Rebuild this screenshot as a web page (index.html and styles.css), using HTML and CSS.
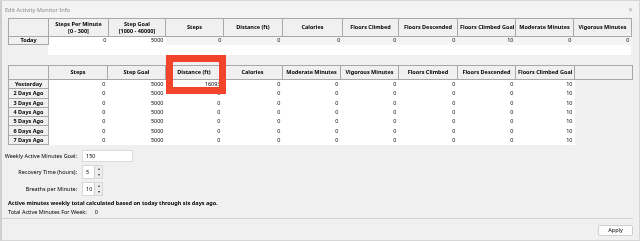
FILE: index.html
```html
<!DOCTYPE html>
<html lang="en">
<head>
  <meta charset="UTF-8" />
  <title>Edit Activity Monitor Info</title>
  <link rel="stylesheet" href="styles.css">
</head>
<body>
  <div class="window">
    <div class="titlebar">
      <span class="title">Edit Activity Monitor Info</span>
      <span class="close">&#x2715;</span>
    </div>

    <!-- today -->
    <table class="grid grid-today">
      <colgroup>
        <col style="width:40px"><col style="width:60px"><col style="width:57px"><col style="width:58px">
        <col style="width:59px"><col style="width:60px"><col style="width:56px"><col style="width:59px">
        <col style="width:58px"><col style="width:58px"><col style="width:58px">
      </colgroup>
      <tr class="head">
        <th></th>
        <th>Steps Per Minute<br>[0 - 300]</th>
        <th>Step Goal<br>[1000 - 40000]</th>
        <th>Steps</th>
        <th>Distance (ft)</th>
        <th>Calories</th>
        <th>Floors Climbed</th>
        <th>Floors Descended</th>
        <th>Floors Climbed Goal</th>
        <th>Moderate Minutes</th>
        <th>Vigorous Minutes</th>
      </tr>
      <tr>
        <th class="rowhead">Today</th>
        <td class="edit">0</td>
        <td class="edit">5000</td>
        <td>0</td>
        <td>0</td>
        <td>0</td>
        <td>0</td>
        <td>0</td>
        <td>10</td>
        <td>0</td>
        <td>0</td>
      </tr>
    </table>
    <div class="grid-fill"></div>

    <!-- previous days -->
    <div class="history">
      <table class="grid grid-days">
        <colgroup>
          <col style="width:40px"><col style="width:59px"><col style="width:58px"><col style="width:57px">
          <col style="width:60px"><col style="width:58px"><col style="width:58px"><col style="width:59px">
          <col style="width:58px"><col style="width:59px"><col style="width:58px">
        </colgroup>
        <tr class="head">
          <th></th>
          <th>Steps</th>
          <th>Step Goal</th>
          <th>Distance (ft)</th>
          <th>Calories</th>
          <th>Moderate Minutes</th>
          <th>Vigorous Minutes</th>
          <th>Floors Climbed</th>
          <th>Floors Descended</th>
          <th>Floors Climbed Goal</th>
          <th></th>
        </tr>
        <tr><th class="rowhead">Yesterday</th><td>0</td><td>5000</td><td>16093</td><td>0</td><td>0</td><td>0</td><td>0</td><td>0</td><td>10</td><td class="blank"></td></tr>
        <tr><th class="rowhead">2 Days Ago</th><td>0</td><td>5000</td><td>0</td><td>0</td><td>0</td><td>0</td><td>0</td><td>0</td><td>10</td><td class="blank"></td></tr>
        <tr><th class="rowhead">3 Days Ago</th><td>0</td><td>5000</td><td>0</td><td>0</td><td>0</td><td>0</td><td>0</td><td>0</td><td>10</td><td class="blank"></td></tr>
        <tr><th class="rowhead">4 Days Ago</th><td>0</td><td>5000</td><td>0</td><td>0</td><td>0</td><td>0</td><td>0</td><td>0</td><td>10</td><td class="blank"></td></tr>
        <tr><th class="rowhead">5 Days Ago</th><td>0</td><td>5000</td><td>0</td><td>0</td><td>0</td><td>0</td><td>0</td><td>0</td><td>10</td><td class="blank"></td></tr>
        <tr><th class="rowhead">6 Days Ago</th><td>0</td><td>5000</td><td>0</td><td>0</td><td>0</td><td>0</td><td>0</td><td>0</td><td>10</td><td class="blank"></td></tr>
        <tr><th class="rowhead">7 Days Ago</th><td>0</td><td>5000</td><td>0</td><td>0</td><td>0</td><td>0</td><td>0</td><td>0</td><td>10</td><td class="blank"></td></tr>
      </table>
    </div>

    <div class="settings">
      <div class="field">
        <label>Weekly Active Minutes Goal:</label>
        <div class="textbox wide">150</div>
      </div>
      <div class="field">
        <label>Recovery Time (hours):</label>
        <div class="spinner"><span class="num">5</span><span class="arrows"><i>&#9652;</i><i>&#9662;</i></span></div>
      </div>
      <div class="field">
        <label>Breaths per Minute:</label>
        <div class="spinner"><span class="num">10</span><span class="arrows"><i>&#9652;</i><i>&#9662;</i></span></div>
      </div>
    </div>

    <p class="note">Active minutes weekly total calculated based on today through six days ago.</p>
    <p class="total"><span>Total Active Minutes For Week:</span><span>0</span></p>

    <div class="footer">
      <button class="apply">Apply</button>
    </div>
  </div>

  <!-- annotation box drawn over the screenshot -->
  <div class="highlight"></div>
</body>
</html>
```

FILE: styles.css
```css
html, body {
  margin: 0;
  padding: 0;
  height: 100%;
  background: #f0f0f0;
  font-family: "Noto Sans", "Open Sans", sans-serif;
  font-size: 5.5px;
  color: #000;
}

body {
  position: relative;
}

.window {
  position: relative;
  height: 239px;
  border: 1px solid #d6d6d6;
  border-left: 2px solid #cfcfcf;
  background: #f0f0f0;
  filter: grayscale(1); /* the dialog itself has no colour */
}

.titlebar {
  height: 17px;
  display: flex;
  align-items: center;
  justify-content: space-between;
  padding: 0 6px 0 3px;
  background: #f3f3f3;
}

.title {
  color: #8c8c8c;
  font-size: 5.6px;
}

.close {
  color: #a8a8a8;
  font-size: 6px;
}

/* grids */
.grid {
  border-collapse: collapse;
  table-layout: fixed;
  margin-left: 6px;
  width: 623px;
}

.grid th,
.grid td {
  padding: 0 2px;
  white-space: nowrap;
  overflow: hidden;
}

.grid th {
  background: #f0f0f0;
  border: 1px solid #a8a8a8;
  font-weight: bold;
  text-align: center;
  color: #000;
}

.grid td {
  background: #f4f4f4;
  text-align: right;
  border: none;
  color: #000;
}

.grid td.edit {
  background: #fff;
}

.grid-today .head th {
  height: 17px;
  line-height: 6.5px;
}

.grid-today td,
.grid-today .rowhead {
  height: 7px;
  line-height: 7px;
}

.grid-fill {
  margin-left: 46px;
  width: 583px;
  height: 10px;
  background: #fff;
}

.history {
  margin-top: 10px;
}

.grid-days {
  width: 624px;
}

.grid-days .head th {
  height: 13px;
  line-height: 13px;
}

.grid-days td,
.grid-days .rowhead {
  height: 8.3px;
  line-height: 8px;
}

.grid-days td {
  background: #fff;
}

.grid-days td.blank {
  background: #f0f0f0;
}

.highlight {
  position: absolute;
  left: 166px;
  top: 55px;
  width: 46px;
  height: 25px;
  border: 7px solid #f2432b;
}

/* settings */
.settings {
  display: flex;
  flex-direction: column;
  gap: 3px;
  margin-top: 5px;
}

.field {
  display: flex;
  align-items: center;
  gap: 5px;
}

.field label {
  width: 75px;
  text-align: right;
}

.textbox {
  height: 10px;
  line-height: 10px;
  background: #fff;
  border: 1px solid #dcdcdc;
  padding: 0 3px;
}

.textbox.wide {
  width: 43px;
}

.spinner {
  display: flex;
  width: 19px;
  height: 12px;
  background: #fff;
  border: 1px solid #d8d8d8;
}

.spinner .num {
  flex: 1;
  line-height: 12px;
  padding-left: 3px;
}

.spinner .arrows {
  display: flex;
  flex-direction: column;
  width: 7px;
  background: #ececec;
  border-left: 1px solid #d0d0d0;
}

.spinner .arrows i {
  flex: 1;
  font-style: normal;
  font-size: 4px;
  line-height: 6px;
  text-align: center;
  color: #333;
}

.note {
  margin: 3px 0 0 6px;
  font-weight: bold;
  line-height: 8px;
}

.total {
  margin: 1px 0 0 6px;
  display: flex;
  gap: 8px;
  line-height: 8px;
}

.footer {
  position: absolute;
  left: 0;
  right: 6px;
  top: 217px;
  border-top: 1px solid #d4d4d4;
  padding-top: 6px;
  display: flex;
  justify-content: flex-end;
}

.apply {
  width: 35px;
  height: 11px;
  padding: 0;
  background: #fdfdfd;
  border: 1px solid #cfcfcf;
  border-radius: 2px;
  font-family: inherit;
  font-size: 5.5px;
  line-height: 9px;
  color: #000;
}
```
